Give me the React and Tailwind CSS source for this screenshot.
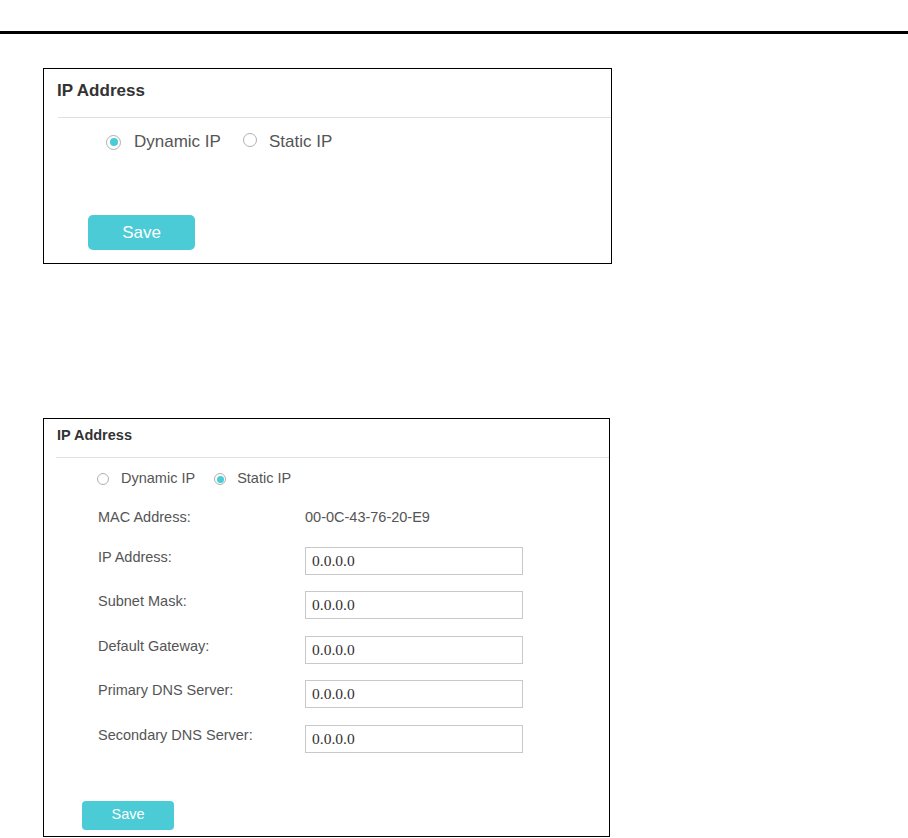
import React from "react";

function Radio({ checked, size, dot }) {
  return (
    <span
      className="inline-flex items-center justify-center rounded-full border border-[#b0b0b0] bg-white shrink-0"
      style={{ width: size, height: size }}
    >
      {checked ? (
        <span className="rounded-full bg-[#4acbd6]" style={{ width: dot, height: dot }} />
      ) : null}
    </span>
  );
}

const rows = [
  "IP Address:",
  "Subnet Mask:",
  "Default Gateway:",
  "Primary DNS Server:",
  "Secondary DNS Server:",
];

export default function App() {
  return (
    <div className="w-[908px] h-[838px] bg-white overflow-hidden font-['Liberation_Sans',Arial,sans-serif]">
      <div className="h-[31px]" />
      <div className="h-[3px] bg-black w-full" />

      {/* Box 1 */}
      <div className="ml-[43px] mt-[34px] w-[569px] h-[196px] border border-black flex flex-col">
        <div className="pl-[13px] pt-[12px] text-[17px] leading-[20px] font-bold text-[#333]">IP Address</div>
        <div className="ml-[14px] mt-[16px] h-px bg-[#e0e0e0]" />
        <div className="mt-[14px] pl-[62px] flex items-center h-[20px] text-[17px] text-[#555]">
          <Radio checked size={15} dot={8} />
          <span className="ml-[13px]">Dynamic IP</span>
          <span className="ml-[22px]"><Radio size={14} /></span>
          <span className="ml-[12px]">Static IP</span>
        </div>
        <button className="mt-[63px] ml-[44px] w-[107px] h-[35px] rounded-[5px] bg-[#4acbd6] text-white text-[17px] flex items-center justify-center">
          Save
        </button>
      </div>

      {/* Box 2 */}
      <div className="ml-[43px] mt-[154px] w-[567px] h-[419px] border border-black flex flex-col">
        <div className="pl-[13px] pt-[8px] text-[14.5px] leading-[17px] font-bold text-[#333]">IP Address</div>
        <div className="ml-[12px] mt-[13px] h-px bg-[#e0e0e0]" />
        <div className="mt-[12px] pl-[53px] flex items-center h-[17px] text-[14.5px] text-[#555]">
          <Radio size={12} />
          <span className="ml-[12px]">Dynamic IP</span>
          <span className="ml-[19px]"><Radio checked size={12} dot={7} /></span>
          <span className="ml-[11px]">Static IP</span>
        </div>
        <div className="mt-[19px] pl-[54px] flex flex-col gap-[16.5px] text-[14.5px] text-[#555]">
          <div className="flex items-center h-[24px]">
            <span className="w-[207px] shrink-0">MAC Address:</span>
            <span>00-0C-43-76-20-E9</span>
          </div>
          {rows.map((r) => (
            <div key={r} className="flex items-start h-[28px]">
              <span className="w-[207px] shrink-0 pt-[2px] leading-[16px]">{r}</span>
              <div className="w-[218px] h-[28px] border border-[#c8c8c8] pl-[6px] flex items-center font-['Liberation_Serif','Times_New_Roman',serif] text-[15.5px] text-[#333]">
                0.0.0.0
              </div>
            </div>
          ))}
        </div>
        <button className="mt-[48px] ml-[38px] w-[92px] h-[29px] rounded-[4px] bg-[#4acbd6] text-white text-[14.5px] flex items-center justify-center">
          Save
        </button>
      </div>
    </div>
  );
}
